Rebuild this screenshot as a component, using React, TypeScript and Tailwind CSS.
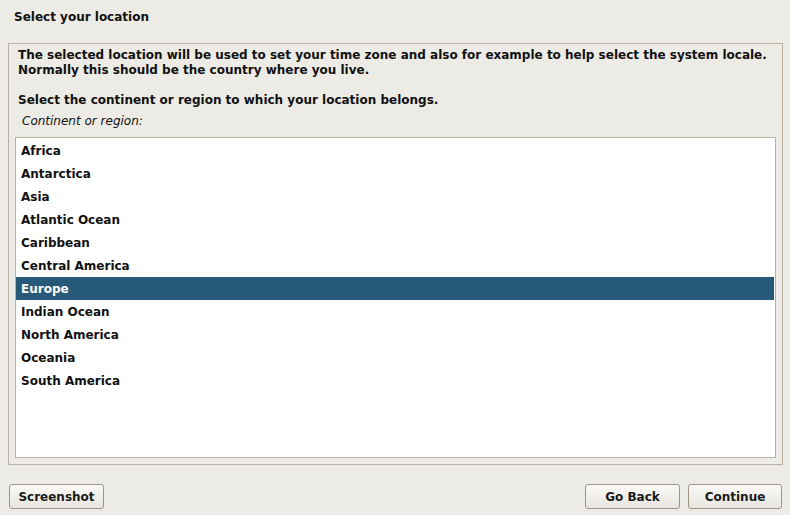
const regions = [
  'Africa',
  'Antarctica',
  'Asia',
  'Atlantic Ocean',
  'Caribbean',
  'Central America',
  'Europe',
  'Indian Ocean',
  'North America',
  'Oceania',
  'South America',
];

function Btn({ label, w }: { label: string; w: string }) {
  return (
    <button
      className={`${w} h-[25px] rounded-[3px] border border-[#9d9588] bg-gradient-to-b from-[#faf9f7] to-[#e8e5df] text-[12px] font-bold text-[#1a1a1a]`}
    >
      {label}
    </button>
  );
}

export default function App() {
  const selected = 'Europe';
  return (
    <div
      className="w-[790px] h-[515px] bg-[#edebe5] text-[#111] flex flex-col overflow-hidden"
      style={{ fontFamily: '"DejaVu Sans", sans-serif' }}
    >
      {/* Title */}
      <div className="h-[43px] pl-[14px] pt-[9px] text-[12px] font-bold leading-[17px]">
        Select your location
      </div>

      {/* Main panel */}
      <div className="mx-[8px] w-[775px] h-[422px] border border-[#b9b1a4] flex flex-col px-[6px] pt-[4px] pb-[6px]">
        <p className="pl-[3px] text-[12px] font-bold leading-[15px]">
          The selected location will be used to set your time zone and also for example to help select the system locale.
          <br />
          Normally this should be the country where you live.
        </p>
        <p className="pl-[3px] mt-[15px] text-[12px] font-bold leading-[15px]">
          Select the continent or region to which your location belongs.
        </p>
        <p className="pl-[7px] mt-[6px] text-[12px] italic leading-[15px]">Continent or region:</p>

        <div className="mt-[8px] flex-1 border border-[#b9b1a4] bg-white pt-[1px] pr-[1px]">
          {regions.map((r) => (
            <div
              key={r}
              className={`h-[23px] flex items-center pl-[5px] text-[12px] font-bold ${
                r === selected ? 'bg-[#265a78] text-white' : 'text-[#111]'
              }`}
            >
              {r}
            </div>
          ))}
        </div>
      </div>

      {/* Buttons */}
      <div className="flex items-center justify-between pl-[9px] pr-[8px] pt-[19px]">
        <Btn label="Screenshot" w="w-[95px]" />
        <div className="flex gap-[8px]">
          <Btn label="Go Back" w="w-[95px]" />
          <Btn label="Continue" w="w-[94px]" />
        </div>
      </div>
    </div>
  );
}
